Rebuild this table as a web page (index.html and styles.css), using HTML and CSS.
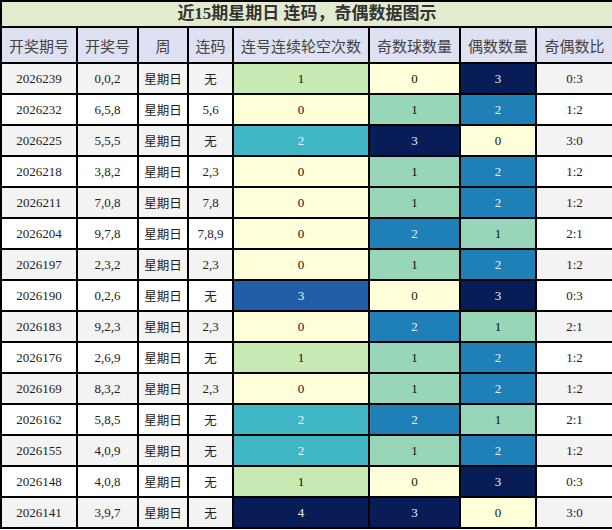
FILE: index.html
```html
<!DOCTYPE html>
<html>
<head>
<meta charset="utf-8">
<link rel="stylesheet" href="styles.css">
</head>
<body>
<table class="grid">
<colgroup>
<col class="c1"><col class="c2"><col class="c3"><col class="c4"><col class="c5"><col class="c6"><col class="c7"><col class="c8">
</colgroup>
<thead>
<tr class="title-row"><th colspan="8" class="title">近15期星期日 连码，奇偶数据图示</th></tr>
<tr class="head-row"><th>开奖期号</th><th>开奖号</th><th>周</th><th>连码</th><th>连号连续轮空次数</th><th>奇数球数量</th><th>偶数数量</th><th>奇偶数比</th></tr>
</thead>
<tbody>
<tr class="odd"><td>2026239</td><td>0,0,2</td><td class="cjk">星期日</td><td class="cjk">无</td><td class="a1">1</td><td class="b0">0</td><td class="b3">3</td><td>0:3</td></tr>
<tr><td>2026232</td><td>6,5,8</td><td class="cjk">星期日</td><td>5,6</td><td class="a0">0</td><td class="b1">1</td><td class="b2">2</td><td>1:2</td></tr>
<tr class="odd"><td>2026225</td><td>5,5,5</td><td class="cjk">星期日</td><td class="cjk">无</td><td class="a2">2</td><td class="b3">3</td><td class="b0">0</td><td>3:0</td></tr>
<tr><td>2026218</td><td>3,8,2</td><td class="cjk">星期日</td><td>2,3</td><td class="a0">0</td><td class="b1">1</td><td class="b2">2</td><td>1:2</td></tr>
<tr class="odd"><td>2026211</td><td>7,0,8</td><td class="cjk">星期日</td><td>7,8</td><td class="a0">0</td><td class="b1">1</td><td class="b2">2</td><td>1:2</td></tr>
<tr><td>2026204</td><td>9,7,8</td><td class="cjk">星期日</td><td>7,8,9</td><td class="a0">0</td><td class="b2">2</td><td class="b1">1</td><td>2:1</td></tr>
<tr class="odd"><td>2026197</td><td>2,3,2</td><td class="cjk">星期日</td><td>2,3</td><td class="a0">0</td><td class="b1">1</td><td class="b2">2</td><td>1:2</td></tr>
<tr><td>2026190</td><td>0,2,6</td><td class="cjk">星期日</td><td class="cjk">无</td><td class="a3">3</td><td class="b0">0</td><td class="b3">3</td><td>0:3</td></tr>
<tr class="odd"><td>2026183</td><td>9,2,3</td><td class="cjk">星期日</td><td>2,3</td><td class="a0">0</td><td class="b2">2</td><td class="b1">1</td><td>2:1</td></tr>
<tr><td>2026176</td><td>2,6,9</td><td class="cjk">星期日</td><td class="cjk">无</td><td class="a1">1</td><td class="b1">1</td><td class="b2">2</td><td>1:2</td></tr>
<tr class="odd"><td>2026169</td><td>8,3,2</td><td class="cjk">星期日</td><td>2,3</td><td class="a0">0</td><td class="b1">1</td><td class="b2">2</td><td>1:2</td></tr>
<tr><td>2026162</td><td>5,8,5</td><td class="cjk">星期日</td><td class="cjk">无</td><td class="a2">2</td><td class="b2">2</td><td class="b1">1</td><td>2:1</td></tr>
<tr class="odd"><td>2026155</td><td>4,0,9</td><td class="cjk">星期日</td><td class="cjk">无</td><td class="a2">2</td><td class="b1">1</td><td class="b2">2</td><td>1:2</td></tr>
<tr><td>2026148</td><td>4,0,8</td><td class="cjk">星期日</td><td class="cjk">无</td><td class="a1">1</td><td class="b0">0</td><td class="b3">3</td><td>0:3</td></tr>
<tr class="odd"><td>2026141</td><td>3,9,7</td><td class="cjk">星期日</td><td class="cjk">无</td><td class="a4">4</td><td class="b3">3</td><td class="b0">0</td><td>3:0</td></tr>
</tbody>
</table>
</body>
</html>
```
FILE: styles.css
```css
html, body {
  margin: 0;
  padding: 0;
  background: #ffffff;
}
.grid {
  width: 612px;
  table-layout: fixed;
  border-collapse: collapse;
  font-family: "Liberation Serif", "Noto Sans CJK SC", serif;
  color: #222222;
}
.c1 { width: 76px; }
.c2 { width: 61px; }
.c3 { width: 50px; }
.c4 { width: 45px; }
.c5 { width: 136px; }
.c6 { width: 91px; }
.c7 { width: 76px; }
.c8 { width: 77px; }
.grid th, .grid td {
  border: 2px solid #000000;
  text-align: center;
  padding: 0;
  overflow: hidden;
  white-space: nowrap;
}
.title-row th {
  height: 24px;
  background: #e3ebcf;
  font-size: 17px;
  font-weight: bold;
  color: #333333;
  line-height: 20px;
}
.head-row th {
  height: 34px;
  background: #dde1f1;
  font-size: 15px;
  font-weight: normal;
  color: #444444;
  font-family: "Noto Sans CJK SC", sans-serif;
}
.grid td {
  height: 29px;
  font-size: 13px;
  background: #ffffff;
  color: #222222;
}
.grid tr.odd td {
  background: #f3f3f3;
}
.grid td.cjk {
  font-family: "Noto Sans CJK SC", sans-serif;
  font-size: 12.5px;
}
.grid tr td.a0 { background: #ffffd9; color: #111111; }
.grid tr td.b0 { background: #ffffd9; color: #111111; }
.grid tr td.a1 { background: #c7e9b4; color: #111111; }
.grid tr td.a2 { background: #41b6c4; color: #f1f1f1; }
.grid tr td.a3 { background: #225ea8; color: #f1f1f1; }
.grid tr td.a4 { background: #081d58; color: #f1f1f1; }
.grid tr td.b1 { background: #97d6b9; color: #111111; }
.grid tr td.b2 { background: #1f80b8; color: #f1f1f1; }
.grid tr td.b3 { background: #081d58; color: #f1f1f1; }
```
